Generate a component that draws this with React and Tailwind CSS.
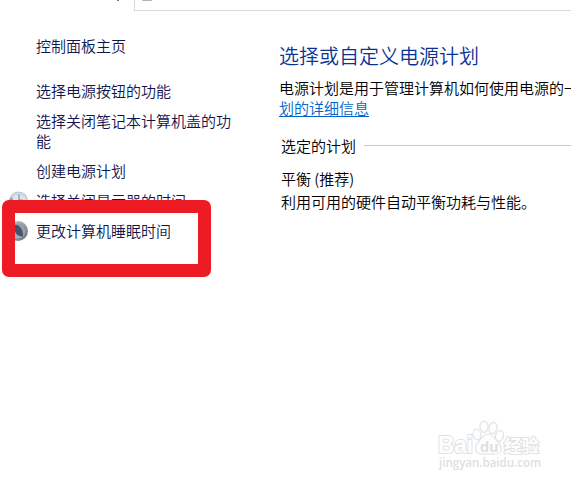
const sideLinks = [
  { label: "选择电源按钮的功能" },
  { label: "选择关闭笔记本计算机盖的功能" },
  { label: "创建电源计划" },
  { label: "选择关闭显示器的时间", icon: "clock" },
  { label: "更改计算机睡眠时间", icon: "moon" },
];

function ClockIcon() {
  return (
    <svg width="20" height="20" viewBox="0 0 20 20">
      <circle cx="10.5" cy="10" r="8.8" fill="#e3e6e9" stroke="#c3c8cd" strokeWidth="1.5" />
      <circle cx="10.5" cy="10" r="6.8" fill="#dbe8f3" stroke="#b9c5d0" strokeWidth=".6" />
      <path d="M11 3.500v5.500h4" fill="none" stroke="#7b91a8" strokeWidth="1.200" />
      <path d="M0 9.500l4-3.500 1.500 4H0z" fill="#8f9be3" />
    </svg>
  );
}

function MoonIcon() {
  return (
    <svg width="20" height="20" viewBox="0 0 20 20">
      <defs>
        <linearGradient id="rim" x1="0" y1="0" x2="1" y2="1">
          <stop offset="0" stopColor="#c8cacc" />
          <stop offset=".5" stopColor="#9a9c9e" />
          <stop offset="1" stopColor="#66686a" />
        </linearGradient>
        <linearGradient id="night" x1="0" y1="1" x2="1" y2="0">
          <stop offset="0" stopColor="#a9bbcd" />
          <stop offset="1" stopColor="#8297ac" />
        </linearGradient>
      </defs>
      <circle cx="10" cy="10" r="10" fill="url(#rim)" />
      <circle cx="10" cy="10" r="7.600" fill="url(#night)" />
      <path d="M5 4.500C10 1.500 15.500 8 15 15.500 10 16 6 12 5 4.500z" fill="#475463" />
    </svg>
  );
}

function Sidebar() {
  return (
    <aside className="w-[279px] shrink-0 pl-9 pt-[25px] text-[15px] leading-5 text-[#10164f]">
      <div className="mb-[25px]">控制面板主页</div>
      <ul className="flex w-[200px] flex-col gap-2.5">
        {sideLinks.map(({ label, icon }) => (
          <li key={label} className="relative">
            {icon && (
              <span className="absolute -left-7 top-0">
                {icon === "clock" ? <ClockIcon /> : <MoonIcon />}
              </span>
            )}
            {label}
          </li>
        ))}
      </ul>
    </aside>
  );
}

function Watermark() {
  return (
    <svg
      className="absolute left-[434px] top-[416px]"
      width="112"
      height="58"
      viewBox="0 0 112 58"
      fill="#fefefe"
      stroke="#e2e2e2"
      strokeWidth="1.2"
      fontFamily="'Liberation Sans', 'Noto Sans CJK SC', sans-serif"
    >
      <g fontWeight="bold" paintOrder="stroke" strokeWidth="2">
        <text x="4" y="37" fontSize="23" textLength="35" lengthAdjust="spacingAndGlyphs">Bai</text>
        <text x="70" y="36" fontSize="17.500" textLength="35" lengthAdjust="spacingAndGlyphs" fontFamily="'Noto Sans CJK SC', sans-serif">经验</text>
      </g>
      <text x="5" y="51" fontSize="12.500" textLength="102" lengthAdjust="spacingAndGlyphs" fill="#e0e0e0" stroke="none" fontWeight="600" fontFamily="'Open Sans', sans-serif">jingyan.baidu.com</text>
      <ellipse cx="43" cy="18.500" rx="3.900" ry="5.300" transform="rotate(-12 43 18.500)" />
      <ellipse cx="50" cy="10.700" rx="4.100" ry="5.600" />
      <ellipse cx="59" cy="12" rx="4.100" ry="5.600" transform="rotate(12 59 12)" />
      <ellipse cx="65.500" cy="20" rx="3.900" ry="5.300" transform="rotate(15 65.500 20)" />
      <path d="M54 18c-4 0-6 3-8.500 6.500C42 28 40 32 42.500 36c2.500 3.500 7 2 11.500 2s10 1.500 12.500-2c2.500-4-.5-8-3.500-11.500C60 21 58 18 54 18z" />
      <text x="46" y="35.500" fontSize="15" fontWeight="bold" fill="#dedede" stroke="none">du</text>
    </svg>
  );
}

export default function App() {
  return (
    <div className="relative h-[483px] w-[571px] overflow-hidden bg-white font-['Noto_Sans_CJK_SC',sans-serif] font-[350]">
      {/* Bottom edge of the address bar */}
      <div className="flex h-[11px] items-start">
        <div className="flex w-[134px] justify-end pr-[15px]">
          <span className="h-px w-0.5 bg-[#777]" />
        </div>
        <div className="h-[11px] flex-1 border-b border-l border-[#d9d9d9] pl-[7px]">
          <div className="h-px w-2.5 rounded-b-full bg-[#a9b9ae]" />
        </div>
      </div>

      <div className="flex">
        <Sidebar />
        <main className="w-[292px] shrink-0 overflow-hidden pt-[31px] text-[15px] leading-5 text-black">
          <h1 className="text-[20px] leading-7 text-[#0b3394]">选择或自定义电源计划</h1>
          <p className="mt-2 whitespace-nowrap">
            电源计划是用于管理计算机如何使用电源的一
            <br />
            <a className="text-[#0066cc] underline underline-offset-2">划的详细信息</a>
          </p>
          <div className="mt-[18px] flex items-center gap-[8px] pl-0.5">
            <h2>选定的计划</h2>
            <div className="-mt-0.5 h-px flex-1 bg-[#c9c9c9]" />
          </div>
          <div className="mt-[11px] pl-0.5 leading-[23px]">
            <div>平衡 (推荐)</div>
            <div>利用可用的硬件自动平衡功耗与性能。</div>
          </div>
        </main>
      </div>

      {/* Highlight frame over the sleep setting */}
      <div className="absolute left-[1.5px] top-[199.5px] h-[77px] w-[209.500px] rounded-[7px] border-[13px] border-[#ed1c24]" />

      <Watermark />
    </div>
  );
}
